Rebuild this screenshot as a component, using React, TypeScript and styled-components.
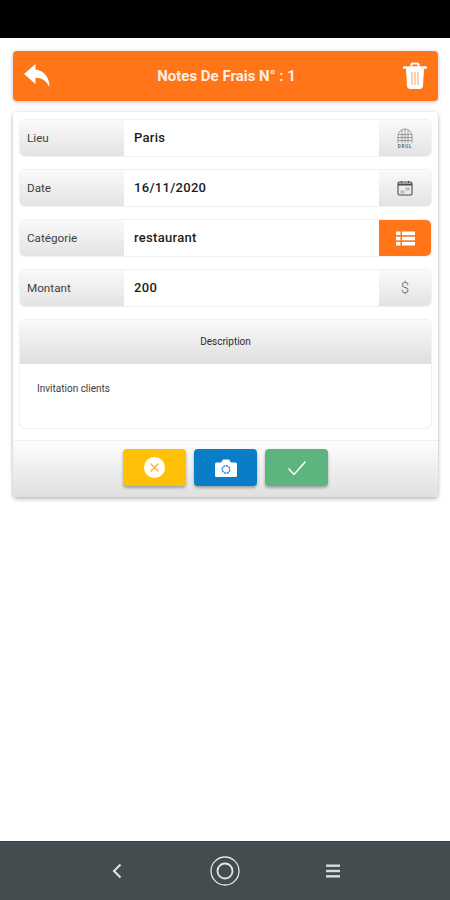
import React from "react";
import styled, { createGlobalStyle } from "styled-components";

const GlobalStyle = createGlobalStyle`
  html, body {
    margin: 0;
    padding: 0;
    background: #fff;
    font-family: Roboto, "Liberation Sans", sans-serif;
  }
`;

const Screen = styled.div`
  width: 450px;
  height: 900px;
  display: flex;
  flex-direction: column;
  overflow: hidden;
`;

const StatusBar = styled.div`
  height: 38px;
  background: #000;
`;

const Content = styled.main`
  flex: 1;
  padding: 13px 12px 0 13px;
`;

const Header = styled.header`
  height: 50px;
  padding: 0 9px 0 10px;
  display: flex;
  align-items: center;
  justify-content: space-between;
  background: #ff7518;
  border-radius: 4px;
  box-shadow: 0 1px 4px rgba(0, 0, 0, 0.25);
  color: #fff;
`;

const Title = styled.h1`
  margin: 0 0 0 1px;
  font-size: 15px;
  font-weight: 700;
  color: #fdf0e4;
`;

const IconSlot = styled.span`
  display: flex;
  width: 28px;
  height: 30px;
  align-items: center;
  justify-content: center;
`;

const Card = styled.section`
  margin-top: 11px;
  background: #fff;
  border-radius: 4px;
  box-shadow: 0 2px 4px rgba(0, 0, 0, 0.25), 0 0 3px rgba(0, 0, 0, 0.1);
`;

const Fields = styled.div`
  padding: 8px 7px 12px 7px;
  display: flex;
  flex-direction: column;
  gap: 14px;
`;

const Row = styled.div`
  height: 36px;
  display: grid;
  grid-template-columns: 104px 1fr 52px;
  border-radius: 5px;
  box-shadow: 0 0 2px rgba(0, 0, 0, 0.2);
  overflow: hidden;
`;

const Label = styled.div`
  display: flex;
  align-items: center;
  padding-left: 7px;
  font-size: 11.7px;
  color: #404040;
  background: linear-gradient(to bottom, #fafafa, #e3e3e3);
`;

const Value = styled.div`
  display: flex;
  align-items: center;
  padding: 0 0 1px 10px;
  font-size: 13px;
  font-weight: 500;
  letter-spacing: 0.3px;
  color: #1c1c1c;
  background: #fff;
`;

const Addon = styled.div<{ $active?: boolean }>`
  display: flex;
  align-items: center;
  justify-content: center;
  color: ${(props) => (props.$active ? "#fff" : "#6a6a6a")};
  font-size: 15px;
  font-weight: 300;
  background: ${(props) =>
    props.$active ? "#ff7518" : "linear-gradient(to bottom, #fafafa, #e3e3e3)"};
`;

const DescriptionBox = styled.div`
  border-radius: 5px;
  box-shadow: 0 0 2px rgba(0, 0, 0, 0.2);
  overflow: hidden;
`;

const DescriptionHead = styled.div`
  height: 44px;
  padding-bottom: 1px;
  box-sizing: border-box;
  display: flex;
  align-items: center;
  justify-content: center;
  font-size: 10px;
  color: #2c2c2c;
  background: linear-gradient(to bottom, #fafafa, #dedede);
`;

const DescriptionBody = styled.div`
  height: 64px;
  padding: 19px 0 0 17px;
  box-sizing: border-box;
  font-size: 10px;
  color: #3a3a3a;
`;

const Footer = styled.div`
  height: 57px;
  padding-top: 8px;
  box-sizing: border-box;
  display: flex;
  justify-content: center;
  gap: 8px;
  border-top: 1px solid #f0f0f0;
  border-radius: 0 0 4px 4px;
  background: linear-gradient(to bottom, #fdfdfd, #e0e0e0);
`;

const ActionButton = styled.button<{ $color: string }>`
  width: 63px;
  height: 37px;
  padding: 0;
  display: flex;
  align-items: center;
  justify-content: center;
  border: none;
  border-radius: 4px;
  background: ${(props) => props.$color};
  box-shadow: 0 2px 3px rgba(0, 0, 0, 0.3);
`;

const BottomNav = styled.nav`
  height: 59px;
  display: flex;
  align-items: center;
  justify-content: center;
  gap: 78px;
  background: #454c50;
  border-top: 1px solid #3a4145;
  box-sizing: border-box;
`;

const NavSlot = styled.span`
  display: flex;
  width: 30px;
  justify-content: center;
`;

const BackIcon = () => (
  <svg width="28" height="26" viewBox="0 0 28 26" fill="#fff">
    <path d="M12.5 1 1 11l11.5 10v-6.2c6.5 0 10.8 2.8 13.8 9.2.4-8.5-4.3-16.500-13.800-17.500z" />
  </svg>
);

const TrashIcon = () => (
  <svg width="24" height="28" viewBox="0 0 24 28" fill="none" stroke="#fff">
    <path d="M1 5.500h22" strokeWidth="2.400" strokeLinecap="round" />
    <path d="M8.500 4.500V2.500a1 1 0 0 1 1-1h5a1 1 0 0 1 1 1v2" strokeWidth="2" />
    <path d="M3.500 6.500l1 18a2.500 2.500 0 0 0 2.500 2h10a2.500 2.500 0 0 0 2.500-2l1-18z" fill="#fff" strokeWidth="1" />
    <path d="M9 10v13M12 10v13M15 10v13" stroke="#f3b385" strokeWidth="1.200" />
  </svg>
);

const GlobeIcon = () => (
  <svg width="22" height="22" viewBox="0 0 22 22" fill="none" stroke="#8a8a8a" strokeWidth="0.800">
    <path d="M4 16V9a7 7 0 0 1 14 0v7" />
    <path d="M4 7.500h14M3.500 10.500h15M4 13.500h14M8 3v13M11 2v14M14 3v13" />
    <text x="11" y="21" fontSize="4.500" fontWeight="700" textAnchor="middle" fill="#666" stroke="none" letterSpacing="0.800">
      DRUL
    </text>
  </svg>
);

const CalendarIcon = () => (
  <svg width="16" height="16" viewBox="0 0 16 16" fill="none" stroke="#4a4a4a">
    <rect x="1" y="2" width="14" height="13" rx="1.500" strokeWidth="1.100" />
    <path d="M1 4.500h14" strokeWidth="2" />
    <path d="M4.500 1v2M11.500 1v2" strokeWidth="1.100" />
    <path d="M4 11h3v2H4zM9 8h3v2H9z" stroke="#999" strokeWidth="0.800" />
  </svg>
);

const ListIcon = () => (
  <svg width="19" height="15" viewBox="0 0 19 15" fill="#fff">
    <rect x="0" y="0.500" width="4.500" height="3.600" />
    <rect x="6" y="0.500" width="13" height="3.600" />
    <rect x="0" y="5.700" width="4.500" height="3.600" />
    <rect x="6" y="5.700" width="13" height="3.600" />
    <rect x="0" y="10.900" width="4.500" height="3.600" />
    <rect x="6" y="10.900" width="13" height="3.600" />
  </svg>
);

const CancelIcon = () => (
  <svg width="21" height="21" viewBox="0 0 21 21">
    <circle cx="10.500" cy="10.500" r="10.500" fill="#fff" />
    <path d="M7 7l7 7M14 7l-7 7" stroke="#f7b84a" strokeWidth="1.600" strokeLinecap="round" />
  </svg>
);

const CameraIcon = () => (
  <svg width="22" height="18" viewBox="0 0 22 18">
    <path d="M1.500 3.500h4.500L8 .5h6l2 3h4.500A1.500 1.500 0 0 1 22 5v11.500a1.500 1.500 0 0 1-1.500 1.500h-19A1.500 1.500 0 0 1 0 16.500V5a1.500 1.500 0 0 1 1.500-1.500z" fill="#fff" />
    <circle cx="11" cy="10.500" r="3.800" fill="none" stroke="#3a8fd0" strokeWidth="1.600" strokeDasharray="2.200 0.700" />
  </svg>
);

const CheckIcon = () => (
  <svg width="20" height="16" viewBox="0 0 20 16" fill="none" stroke="#fff" strokeWidth="1.500">
    <path d="M1.500 8.500 7 14.500 18.500 1.500" />
  </svg>
);

const NavBack = () => (
  <svg width="10" height="16" viewBox="0 0 10 16" fill="none" stroke="#e4e6e7" strokeWidth="2">
    <path d="M8.500 1.500 2 8l6.500 6.500" />
  </svg>
);

const NavHome = () => (
  <svg width="30" height="30" viewBox="0 0 30 30" fill="none" stroke="#e4e6e7">
    <circle cx="15" cy="15" r="14" strokeWidth="1.300" />
    <circle cx="15" cy="15" r="7.500" strokeWidth="1.800" />
  </svg>
);

const NavMenu = () => (
  <svg width="14" height="14" viewBox="0 0 14 14" fill="#d9dcdd">
    <rect y="0.500" width="14" height="2.400" />
    <rect y="5.800" width="14" height="2.400" />
    <rect y="11.100" width="14" height="2.400" />
  </svg>
);

const fields = [
  { label: "Lieu", value: "Paris", addon: <GlobeIcon /> },
  { label: "Date", value: "16/11/2020", addon: <CalendarIcon /> },
  { label: "Catégorie", value: "restaurant", addon: <ListIcon />, active: true },
  { label: "Montant", value: "200", addon: "$" },
];

export default function App() {
  return (
    <Screen>
      <GlobalStyle />
      <StatusBar />
      <Content>
        <Header>
          <IconSlot>
            <BackIcon />
          </IconSlot>
          <Title>Notes De Frais N° : 1</Title>
          <IconSlot>
            <TrashIcon />
          </IconSlot>
        </Header>
        <Card>
          <Fields>
            {fields.map((field) => (
              <Row key={field.label}>
                <Label>{field.label}</Label>
                <Value>{field.value}</Value>
                <Addon $active={field.active}>{field.addon}</Addon>
              </Row>
            ))}
            <DescriptionBox>
              <DescriptionHead>Description</DescriptionHead>
              <DescriptionBody>Invitation clients</DescriptionBody>
            </DescriptionBox>
          </Fields>
          <Footer>
            <ActionButton $color="#ffc107">
              <CancelIcon />
            </ActionButton>
            <ActionButton $color="#0a7dc9">
              <CameraIcon />
            </ActionButton>
            <ActionButton $color="#5cb57f">
              <CheckIcon />
            </ActionButton>
          </Footer>
        </Card>
      </Content>
      <BottomNav>
        <NavSlot>
          <NavBack />
        </NavSlot>
        <NavSlot>
          <NavHome />
        </NavSlot>
        <NavSlot>
          <NavMenu />
        </NavSlot>
      </BottomNav>
    </Screen>
  );
}
